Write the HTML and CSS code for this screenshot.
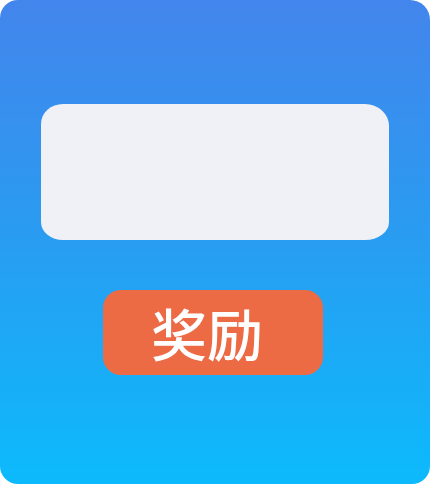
FILE: index.html
```html
<!DOCTYPE html>
<html lang="zh">
<head>
<meta charset="utf-8">
<link rel="stylesheet" href="styles.css">
</head>
<body>
<div class="card">
  <div class="panel"></div>
  <div class="reward">奖励</div>
</div>
</body>
</html>
```
FILE: styles.css
```css
html, body {
  margin: 0;
  padding: 0;
  background: #ffffff;
}
.card {
  width: 430px;
  height: 484px;
  box-sizing: border-box;
  border-radius: 18px 20px 18px 18px;
  background: linear-gradient(180deg, #4385ec 0%, #2b9af1 45%, #0cbafc 100%);
  padding: 104px 0 0 41px;
  display: flex;
  flex-direction: column;
  align-items: flex-start;
}
.panel {
  width: 348px;
  height: 136px;
  background: #f0f1f7;
  border-radius: 22px 24px 24px 22px / 20px 22px 18px 18px;
}
.reward {
  margin-top: 50px;
  margin-left: 62px;
  width: 220px;
  height: 85px;
  border-radius: 18px;
  background: #ec6b45;
  color: #ffffff;
  font-family: "Noto Sans CJK SC", "Noto Sans", sans-serif;
  font-size: 56px;
  font-weight: 500;
  line-height: 84px;
  box-sizing: border-box;
  padding-left: 48px;
  letter-spacing: 0;
}
```
